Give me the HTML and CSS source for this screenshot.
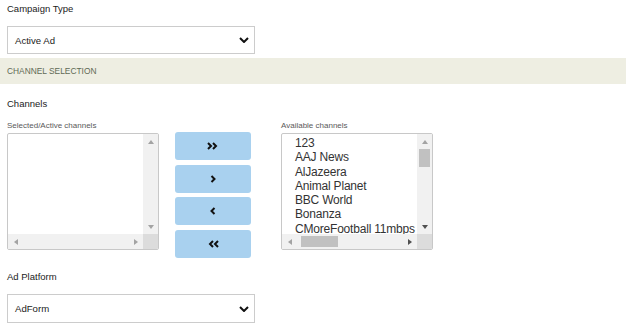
FILE: index.html
```html
<!DOCTYPE html>
<html lang="en">
<head>
    <meta charset="UTF-8">
    <meta name="viewport" content="width=device-width, initial-scale=1.0">
    <title>Campaign channels</title>
    <link rel="stylesheet" href="styles.css">
</head>
<body>
    <div class="page">
        <div class="field-label">Campaign Type</div>
        <div class="select">
            <span>Active Ad</span>
            <svg class="chevron" width="10" height="6" viewBox="0 0 10 6"><polyline points="1,1 5,5 9,1" fill="none" stroke="#111" stroke-width="2"/></svg>
        </div>

        <div class="section-band">Channel selection</div>

        <div class="field-label channels-label">Channels</div>
        <div class="channel-row">
            <div class="list-col">
                <div class="list-label">Selected/Active channels</div>
                <div class="listbox">
                    <div class="options"></div>
                    <div class="vbar">
                        <div class="sb-btn"><span class="arrow up"></span></div>
                        <div class="sb-track"></div>
                        <div class="sb-btn"><span class="arrow down"></span></div>
                    </div>
                    <div class="hbar">
                        <div class="sb-btn"><span class="arrow left"></span></div>
                        <div class="sb-track"></div>
                        <div class="sb-btn"><span class="arrow right"></span></div>
                    </div>
                    <div class="corner"></div>
                </div>
            </div>

            <div class="move-buttons">
                <button class="move-btn"><svg width="12" height="8" viewBox="0 0 12 8"><polyline points="1,1 4,4 1,7" fill="none" stroke="#111" stroke-width="2"/><polyline points="6,1 9,4 6,7" fill="none" stroke="#111" stroke-width="2"/></svg></button>
                <button class="move-btn"><svg width="6" height="8" viewBox="0 0 6 8"><polyline points="1.5,1 4.5,4 1.5,7" fill="none" stroke="#111" stroke-width="2"/></svg></button>
                <button class="move-btn"><svg width="6" height="8" viewBox="0 0 6 8"><polyline points="4.5,1 1.5,4 4.5,7" fill="none" stroke="#111" stroke-width="2"/></svg></button>
                <button class="move-btn"><svg width="12" height="8" viewBox="0 0 12 8"><polyline points="6,1 3,4 6,7" fill="none" stroke="#111" stroke-width="2"/><polyline points="11,1 8,4 11,7" fill="none" stroke="#111" stroke-width="2"/></svg></button>
            </div>

            <div class="list-col">
                <div class="list-label">Available channels</div>
                <div class="listbox">
                    <div class="options">
                        <div class="option">123</div>
                        <div class="option">AAJ News</div>
                        <div class="option">AlJazeera</div>
                        <div class="option">Animal Planet</div>
                        <div class="option">BBC World</div>
                        <div class="option">Bonanza</div>
                        <div class="option">CMoreFootball 11mbps HD</div>
                    </div>
                    <div class="vbar">
                        <div class="sb-btn"><span class="arrow up"></span></div>
                        <div class="sb-track"><div class="thumb-v"></div></div>
                        <div class="sb-btn"><span class="arrow down active"></span></div>
                    </div>
                    <div class="hbar">
                        <div class="sb-btn"><span class="arrow left"></span></div>
                        <div class="sb-track"><div class="thumb-h"></div></div>
                        <div class="sb-btn"><span class="arrow right active"></span></div>
                    </div>
                    <div class="corner"></div>
                </div>
            </div>
        </div>

        <div class="field-label platform-label">Ad Platform</div>
        <div class="select platform-select">
            <span>AdForm</span>
            <svg class="chevron" width="10" height="6" viewBox="0 0 10 6"><polyline points="1,1 5,5 9,1" fill="none" stroke="#111" stroke-width="2"/></svg>
        </div>
    </div>
</body>
</html>
```

FILE: styles.css
```css
body {
    margin: 0;
    background-color: #ffffff;
    color: #333333;
    font-family: "Liberation Sans", Arial, sans-serif;
}
.page {
    padding: 3px 7px 0;
}
.field-label {
    font-size: 9.5px;
    line-height: 12px;
    height: 12px;
    color: #222;
}
.select {
    margin-top: 11px;
    width: 248px;
    height: 28px;
    box-sizing: border-box;
    border: 1px solid #cccccc;
    background-color: #fff;
    display: flex;
    align-items: center;
    justify-content: space-between;
    padding: 0 5px 0 7px;
    font-size: 9.6px;
    color: #222;
}
.chevron {
    display: block;
}
.section-band {
    margin: 4px -7px 0;
    height: 26px;
    line-height: 26px;
    padding-left: 7px;
    background-color: #eeeee2;
    color: #5f6a55;
    font-size: 8.4px;
    text-transform: uppercase;
}
.channels-label {
    margin-top: 14px;
}
.channel-row {
    display: flex;
    align-items: flex-start;
    margin-top: 11px;
}
.list-col {
    width: 152px;
}
.list-label {
    font-size: 8px;
    line-height: 10px;
    height: 12px;
    color: #5a5a5a;
}
.listbox {
    height: 117px;
    box-sizing: border-box;
    border: 1px solid #c8c8c8;
    border-radius: 2px;
    display: grid;
    grid-template-columns: 1fr 15px;
    grid-template-rows: 1fr 15px;
    overflow: hidden;
}
.options {
    overflow: hidden;
    padding: 2px 0 0 13px;
    font-size: 12px;
    line-height: 14.3px;
    letter-spacing: -0.2px;
    color: #333;
    white-space: nowrap;
}
.vbar, .hbar {
    background-color: #f1f1f1;
    display: flex;
}
.vbar {
    flex-direction: column;
}
.sb-btn {
    width: 15px;
    height: 15px;
    flex: none;
    display: flex;
    align-items: center;
    justify-content: center;
}
.sb-track {
    flex: 1;
    position: relative;
}
.corner {
    background-color: #dcdcdc;
}
.arrow {
    width: 0;
    height: 0;
    border-style: solid;
    border-color: transparent;
}
.arrow.up {
    border-width: 0 3.5px 4px;
    border-bottom-color: #a3a3a3;
}
.arrow.down {
    border-width: 4px 3.5px 0;
    border-top-color: #a3a3a3;
}
.arrow.left {
    border-width: 3.5px 4px 3.5px 0;
    border-right-color: #a3a3a3;
}
.arrow.right {
    border-width: 3.5px 0 3.5px 4px;
    border-left-color: #a3a3a3;
}
.arrow.down.active {
    border-top-color: #505050;
}
.arrow.right.active {
    border-left-color: #505050;
}
.thumb-v {
    margin: 0 2px;
    height: 18px;
    background-color: #c1c1c1;
}
.thumb-h {
    margin: 2px 0 0 4px;
    width: 37px;
    height: 11px;
    background-color: #c1c1c1;
}
.move-buttons {
    margin: -1px 30px 0 16px;
    padding-top: 12px;
    display: flex;
    flex-direction: column;
    gap: 4.7px;
}
.move-btn {
    width: 76px;
    height: 28px;
    border: none;
    border-radius: 3px;
    background-color: #a9d1ef;
    display: flex;
    align-items: center;
    justify-content: center;
    padding: 0;
    cursor: pointer;
}
.platform-label {
    margin-top: 13px;
}
.platform-select {
    margin-top: 11px;
    height: 29px;
}
```
